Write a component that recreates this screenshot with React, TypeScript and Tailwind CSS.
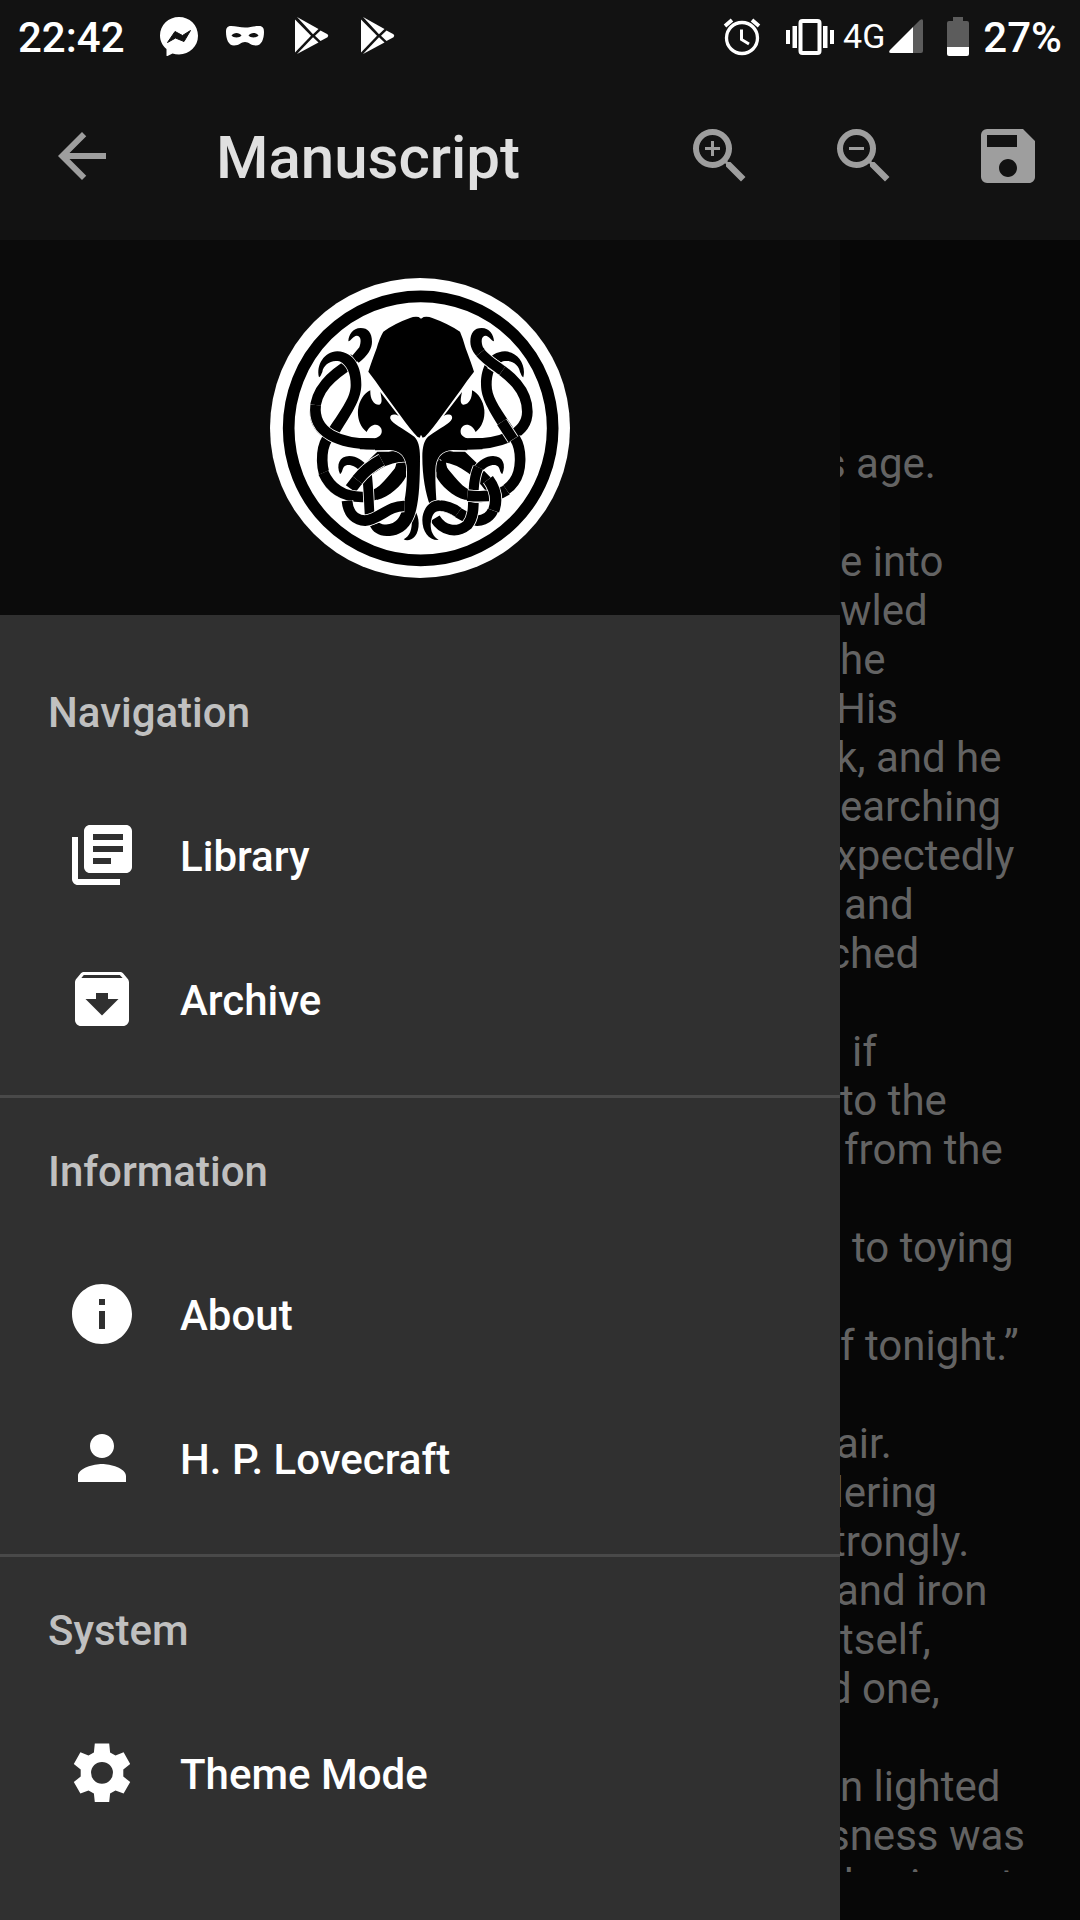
import type { ComponentType, ReactNode } from "react";
import {
  MdArchive,
  MdArrowBack,
  MdInfo,
  MdLibraryBooks,
  MdPerson,
  MdSave,
  MdZoomIn,
  MdZoomOut,
} from "react-icons/md";

/* ---------- Emblem ---------- */

/** A tentacle segment with a thin white casing so that crossings stay legible. */
function Strand({ d, width = 32 }: { d: string; width?: number }) {
  return (
    <g fill="none">
      <path d={d} stroke="#fff" strokeWidth={width + 5} />
      <path d={d} stroke="#000" strokeWidth={width} />
    </g>
  );
}

/** A filled piece (tapering tip, face plate) with the same casing. */
function Plate({ d }: { d: string }) {
  return <path d={d} stroke="#fff" strokeWidth={5} className="[paint-order:stroke]" />;
}

const OUTER_HOOK =
  "M336 215C336 188 324 174 302 174C278 174 266 194 265 214C272 213 280 198 290 197C304 198 304 215 298 232L276 258L296 278C325 255 336 235 336 215Z";
const OUTER_LOOP = "M276 278C215 315 165 360 165 425C165 490 240 524 350 522";
const INNER_HOOK =
  "M177 322C168 285 192 246 232 244C284 246 305 295 304 345C303 385 285 415 235 494L203 480C250 410 272 380 272 345C272 312 262 285 238 274C212 268 190 285 187 306C184 312 182 320 177 322Z";
const LOWER_LOOP = "M202 505C180 540 182 605 205 635C230 672 280 684 320 680C375 674 395 625 440 580";
const LOWER_ROOT = "M438 572L410 572C405 610 390 630 350 655L350 690C390 680 425 645 438 620Z";
const CURL =
  "M240 612C228 585 238 558 268 558C290 559 308 570 324 590L302 606C287 586 262 580 252 590C246 598 248 607 240 612Z";
const CURL_STEM = "M320 606C326 650 326 690 329 738";
const COIL_TOP = "M445 558C385 552 320 590 272 656";
const COIL_ROOT = "M352 545L305 590L360 574L445 572V545Z";
const COIL_BOTTOM = "M261 692C265 735 290 752 315 752C360 748 385 706 434 708";

const FACE_TOP =
  "M361 366L416 438C402 430 388 434 391 446C398 462 425 472 463 500C474 510 480 530 480 560";
const FACE_SIDE =
  "C440 560 420 541 390 540L345 541L345 505C362 500 368 490 364 476C355 458 332 460 320 486C300 470 292 445 294 420C297 392 312 370 331 361C330 385 340 405 358 404C368 400 365 385 361 366Z";

function Emblem() {
  return (
    <svg viewBox="30 24 900 900" className="size-[300px]" role="img" aria-label="Octopus emblem">
      <circle cx="480" cy="474" r="450" fill="#fff" />
      <circle cx="482" cy="475" r="396" fill="none" stroke="#000" strokeWidth="35" />
      <g>
        <Plate d={OUTER_HOOK} />
        <Strand d={OUTER_LOOP} />
        <path d="M283 262L262 286" stroke="#000" strokeWidth="28" />
        <Plate d={INNER_HOOK} />
        <Plate d={CURL} />
        <Strand d={LOWER_LOOP} />
        <path d={LOWER_ROOT} />
        <Strand d={COIL_TOP} width={36} />
        <path d={COIL_ROOT} />
        <Strand d="M190 608C215 664 262 682 310 681" />
        <Strand d={CURL_STEM} width={29} />
        <Strand d="M365 570C335 586 312 604 292 630" width={36} />
        <Strand d="M167 405C157 490 240 524 350 522" />
        <Plate d="M463 720C480 740 480 780 465 799C455 812 438 813 431 808C448 800 458 780 455 745Z" />
        <Plate
          d={
            FACE_TOP +
            "C480 660 475 720 455 755C435 790 405 798 380 798C355 798 338 785 330 768C345 762 350 760 357 758C375 768 400 765 415 745C435 715 441 650 441 600" +
            FACE_SIDE
          }
        />
        <Strand d={COIL_BOTTOM} />
        <path d="M300 521L360 522" stroke="#000" strokeWidth="34" />
      </g>
      <g transform="translate(967 0) scale(-1 1)">
        <Plate d={INNER_HOOK} />
        <Strand d={OUTER_LOOP} />
        <Plate d={OUTER_HOOK} />
        <Strand d="M306 248C290 268 265 284 240 302" width={31} />
        <Strand d="M242 456L208 508" />
        <Strand d={COIL_TOP} width={36} />
        <path d={COIL_ROOT} />
        <Strand d={COIL_BOTTOM} />
        <Strand d="M326 650C329 690 320 735 345 765C375 790 418 785 442 745" />
        <Strand d={LOWER_LOOP} />
        <path d={LOWER_ROOT} />
        <Plate d={CURL} />
        <Strand d="M312 592C322 615 325 640 326 660" width={30} />
        <Strand d="M227 660C250 676 290 682 345 677" />
        <Strand d="M282 628C255 665 258 700 266 722" width={34} />
        <Plate
          d={FACE_TOP + "C480 620 470 670 457 706L437 702C441 650 441 625 441 600" + FACE_SIDE}
        />
        <path d="M300 521L360 522" stroke="#000" strokeWidth="34" />
        <Strand d="M372 727C390 714 405 707 430 707" />
        <Plate d="M428 691C460 690 480 720 480 750C480 785 460 812 431 810C448 798 455 785 455 762C452 735 445 723 428 723Z" />
        <path d="M410 708L436 707" stroke="#000" strokeWidth="30" />
      </g>
      <path
        d="M483 146L476 141Q462 139 450 144Q405 160 370 185Q358 205 350 235Q335 275 325 305Q345 330 365 360L420 435Q452 480 472 500L479 503L483 494L488 503L495 500Q515 480 547 435L602 360Q622 330 642 305Q632 275 617 235Q609 205 600 185Q562 160 517 144Q505 139 491 141Z"
        stroke="#fff"
        strokeWidth="5"
        className="[paint-order:stroke]"
      />
    </svg>
  );
}

/* ---------- Status bar ---------- */

function MessengerIcon() {
  return (
    <svg viewBox="0 0 48 48" className="size-12" aria-hidden="true">
      <path
        fill="#fff"
        d="M24 5C13.500 5 5 13 5 23.500C5 29 7.500 33.500 11.500 37V43.500C11.500 44 12 44.300 12.500 44L17.500 41.500C19.500 42.200 21.700 42.500 24 42.500C34.500 42.500 43 34.500 43 23.800C43 13 34.500 5 24 5Z"
      />
      <path
        fill="#121212"
        stroke="#121212"
        strokeLinejoin="round"
        d="M12.500 30.500L20 19.500L27.500 23.500L35.500 18.500L29 29.500L20.500 26Z"
      />
    </svg>
  );
}

function MaskIcon() {
  return (
    <svg viewBox="0 0 48 48" className="size-12" aria-hidden="true">
      <path
        fill="#fff"
        fillRule="evenodd"
        d="M10 14C15 14 19 15.500 24 15.500S33 14 38 14C42 14 43 16.500 43 20C43 27 40.500 33.500 35 33.500C29.500 33.500 28 30 24 30S18.500 33.500 13 33.500C7.500 33.500 5 27 5 20C5 16.500 6 14 10 14ZM10.500 23.500C12 26 19 26 20.500 23.500C18.500 20 12.500 20 10.500 23.500ZM27.500 23.500C29 26 36 26 37.500 23.500C35.500 20 29.500 20 27.500 23.500Z"
      />
    </svg>
  );
}

function PlayIcon() {
  return (
    <svg viewBox="0 0 48 48" className="size-12" aria-hidden="true">
      <g fill="#fff">
        <path d="M8 7.500L24 23.800L8 40.500Z" />
        <path d="M10 5L31.500 17L26 22.200Z" />
        <path d="M10 42L31.500 30.500L26 25.300Z" />
        <path d="M33.500 18.500L40.500 22.300Q42 23.800 40.500 25.300L33.500 29L28 23.800Z" />
      </g>
    </svg>
  );
}

function AlarmIcon() {
  return (
    <svg viewBox="0 0 38 40" className="h-10 w-[38px]" fill="none" stroke="#fff" aria-hidden="true">
      <circle cx="19" cy="22" r="15.500" strokeWidth="3.300" />
      <path d="M18.500 13.500V23.500L26 28" strokeWidth="3" />
      <path d="M2 10L9 4M36 10L29 4" strokeWidth="3.800" />
    </svg>
  );
}

function VibrateIcon() {
  return (
    <svg viewBox="0 0 50 40" className="h-10 w-[50px]" fill="#fff" aria-hidden="true">
      <rect x="15.500" y="5" width="19" height="32" rx="2" fill="none" stroke="#fff" strokeWidth="4" />
      <rect x="1" y="14" width="4" height="14" />
      <rect x="7.500" y="10" width="4.500" height="22" />
      <rect x="38" y="10" width="4.500" height="22" />
      <rect x="45" y="14" width="4" height="14" />
    </svg>
  );
}

function SignalIcon() {
  return (
    <svg viewBox="0 0 34 34" className="size-[34px]" aria-hidden="true">
      <path fill="#5c5c5c" d="M24 8L31 1Q34 -1 34 2V32Q34 34 32 34H24Z" />
      <path fill="#fff" d="M24 8V34H2Q-1 34 1 31Z" />
    </svg>
  );
}

function BatteryIcon() {
  return (
    <svg viewBox="0 0 22 39" className="h-[39px] w-[22px]" aria-hidden="true">
      <path fill="#5c5c5c" d="M6 0H16V4H20Q22 4 22 6V30H0V6Q0 4 2 4H6Z" />
      <path fill="#fff" d="M0 30H22V37Q22 39 20 39H2Q0 39 0 37Z" />
    </svg>
  );
}

function StatusBar() {
  return (
    <div className="flex h-[72px] shrink-0 items-center justify-between px-[18px] text-[42px] leading-[49px] font-medium text-white">
      <div className="flex items-center gap-[18px]">
        <span className="mr-3 pt-0.5">22:42</span>
        <MessengerIcon />
        <MaskIcon />
        <PlayIcon />
        <PlayIcon />
      </div>
      <div className="flex items-center">
        <AlarmIcon />
        <span className="ml-6">
          <VibrateIcon />
        </span>
        <span className="ml-2 text-[34px] font-normal">4G</span>
        <span className="ml-1">
          <SignalIcon />
        </span>
        <span className="ml-6">
          <BatteryIcon />
        </span>
        <span className="ml-3.5 pt-0.5">27%</span>
      </div>
    </div>
  );
}

/* ---------- App bar ---------- */

function IconButton({ label, children }: { label: string; children: ReactNode }) {
  return (
    <button type="button" aria-label={label} className="size-[72px] text-[72px] text-[#9e9e9e]">
      {children}
    </button>
  );
}

function AppBar() {
  return (
    <header className="flex h-[168px] shrink-0 items-center pr-9 pl-[46px]">
      <IconButton label="Back">
        <MdArrowBack />
      </IconButton>
      <h1 className="ml-[98px] flex-1 pt-1 text-[60px] leading-[72px] font-medium text-[#e0e0e0]">Manuscript</h1>
      <div className="flex gap-[72px]">
        <IconButton label="Zoom in">
          <MdZoomIn />
        </IconButton>
        <IconButton label="Zoom out">
          <MdZoomOut />
        </IconButton>
        <IconButton label="Save">
          <MdSave />
        </IconButton>
      </div>
    </header>
  );
}

/* ---------- Drawer ---------- */

function GearIcon() {
  return (
    <svg viewBox="0 0 24 24" width="1em" height="1em" fill="currentColor">
      <path
        fillRule="evenodd"
        d="M9.600 2.200H14.400L14.700 5.200L16.500 6.200L19.200 5.100L21.400 9L19.100 10.800V13.200L21.400 15L19.200 18.800L16.500 17.800L14.700 18.800L14.400 21.700H9.600L9.300 18.800L7.500 17.800L4.800 18.800L2.600 15L4.900 13.200V10.800L2.600 9L4.800 5.100L7.500 6.200L9.300 5.200ZM12 8.300A3.650 3.650 0 0 0 12 15.600A3.650 3.650 0 0 0 12 8.300Z"
      />
    </svg>
  );
}

type Item = { label: string; icon: ComponentType };

const sections: { title: string; items: Item[] }[] = [
  {
    title: "Navigation",
    items: [
      { label: "Library", icon: MdLibraryBooks },
      { label: "Archive", icon: MdArchive },
    ],
  },
  {
    title: "Information",
    items: [
      { label: "About", icon: MdInfo },
      { label: "H. P. Lovecraft", icon: MdPerson },
    ],
  },
  { title: "System", items: [{ label: "Theme Mode", icon: GearIcon }] },
];

function Drawer() {
  return (
    <aside className="w-7/9 shrink-0 bg-[#303030]">
      <div className="flex h-[375px] items-center justify-center bg-[#0b0b0b]">
        <Emblem />
      </div>
      <nav className="pt-6 text-[42px] leading-[49px] font-medium">
        {sections.map((section) => (
          <section key={section.title} className="border-b-3 border-[#494949] pb-6 last:border-b-0">
            <h2 className="flex h-36 items-center px-12 pt-0.5 text-[#c0c0c0]">{section.title}</h2>
            <ul>
              {section.items.map(({ label, icon: Icon }) => (
                <li key={label}>
                  <button type="button" className="flex h-36 w-full items-center gap-[42px] px-[66px] text-white">
                    <span className="text-[72px]" aria-hidden="true">
                      <Icon />
                    </span>
                    <span className="pt-0.5">{label}</span>
                  </button>
                </li>
              ))}
            </ul>
          </section>
        ))}
      </nav>
    </aside>
  );
}

/* ---------- Manuscript text beside the drawer ---------- */

const lines: [string, string][] = [
  ["s age.", "-ml-4"],
  ["", ""],
  ["e into", ""],
  ["wled", ""],
  ["he", ""],
  ["His", "-ml-1"],
  ["k, and he", "-ml-1"],
  ["earching", ""],
  ["xpectedly", "-ml-1"],
  ["and", "ml-1"],
  ["ched", "-ml-3"],
  ["", ""],
  ["if", "ml-3"],
  ["to the", ""],
  ["from the", "ml-1"],
  ["", ""],
  ["to toying", "ml-3"],
  ["", ""],
  ["f tonight.”", ""],
  ["", ""],
  ["air.", "-ml-1"],
  ["dering", "-ml-5"],
  ["trongly.", "-ml-2"],
  ["and iron", "-ml-1"],
  ["tself,", ""],
  ["d one,", "-ml-3"],
  ["", ""],
  ["n lighted", ""],
  ["sness was", "-ml-3"],
  ["having at", "ml-1"],
];

function Manuscript() {
  return (
    <main className="min-w-0 flex-1 bg-[#070707] pt-[199px] pb-12">
      <div className="h-full overflow-hidden text-[42px] leading-[49px] whitespace-nowrap text-[#636363]">
        {lines.map(([text, indent], i) => (
          <p key={i} className={indent}>
            {text || "\u00a0"}
          </p>
        ))}
      </div>
    </main>
  );
}

export default function App() {
  return (
    <div className="flex h-screen flex-col overflow-hidden bg-[#121212] font-[Roboto,sans-serif]">
      <StatusBar />
      <AppBar />
      <div className="flex min-h-0 flex-1">
        <Drawer />
        <Manuscript />
      </div>
    </div>
  );
}
